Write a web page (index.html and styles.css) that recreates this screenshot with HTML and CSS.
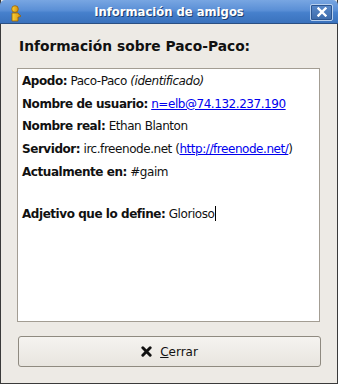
FILE: index.html
```html
<!DOCTYPE html>
<html>
<head>
<meta charset="utf-8">
<link rel="stylesheet" href="styles.css">
</head>
<body>
<div class="window">
  <div class="titlebar">
    <svg class="app-icon" width="12" height="17" viewBox="0 0 12 17">
      <defs>
        <linearGradient id="yg" x1="0" y1="0" x2="1" y2="0">
          <stop offset="0" stop-color="#f7d23a"/>
          <stop offset="1" stop-color="#d8900a"/>
        </linearGradient>
      </defs>
      <circle cx="5" cy="4" r="3.3" fill="url(#yg)" stroke="#9a6200" stroke-width="0.8"/>
      <path d="M2 8 L8 8 L9.5 10 L11 11 L9 12 L8 12 L8 16 L2 16 Z" fill="url(#yg)" stroke="#9a6200" stroke-width="0.8"/>
    </svg>
    <div class="title">Información de amigos</div>
    <div class="close-btn">
      <svg width="10" height="10" viewBox="0 0 10 10"><path d="M1.5 1.5 L8.5 8.5 M8.5 1.5 L1.5 8.5" stroke="#fff" stroke-width="2.4" stroke-linecap="square"/></svg>
    </div>
  </div>
  <div class="content">
    <h1 class="heading">Información sobre Paco-Paco:</h1>
    <div class="info-box">
      <div class="line"><b>Apodo:</b> Paco-Paco <i>(identificado)</i></div>
      <div class="line"><b>Nombre de usuario:</b> <a href="#">n=elb@74.132.237.190</a></div>
      <div class="line"><b>Nombre real:</b> Ethan Blanton</div>
      <div class="line"><b>Servidor:</b> irc.freenode.net (<a href="#">http://freenode.net/</a>)</div>
      <div class="line"><b>Actualmente en:</b> #gaim</div>
      <div class="line blank"></div>
      <div class="line"><b>Adjetivo que lo define:</b> Glorioso<span class="caret"></span></div>
    </div>
    <button class="btn">
      <svg class="btn-icon" width="11" height="11" viewBox="0 0 12 12"><path d="M2 2 L10 10 M10 2 L2 10" stroke="#111" stroke-width="3.2" stroke-linecap="round"/></svg>
      <span><u>C</u>errar</span>
    </button>
  </div>
</div>
</body>
</html>
```
FILE: styles.css
```css
html, body {
  margin: 0;
  padding: 0;
  background: #edeae5;
}
.window {
  width: 338px;
  height: 384px;
  box-sizing: border-box;
  border: 1px solid #3a3a3a;
  border-top: none;
  background: #edeae5;
  display: flex;
  flex-direction: column;
  font-family: "DejaVu Sans", sans-serif;
}
.titlebar {
  height: 23px;
  margin: 0 -1px;
  border-radius: 5px 5px 0 0;
  background: linear-gradient(#78a6e2 0%, #5a8fd6 45%, #4680cc 55%, #3a72bd 100%);
  border-bottom: 1px solid #2b4f82;
  display: flex;
  align-items: center;
}
.app-icon {
  margin-left: 10px;
  margin-top: 4px;
  flex: none;
}
.title {
  flex: 1;
  text-align: center;
  color: #fff;
  font-weight: bold;
  font-size: 11.6px;
  text-shadow: 1px 1px 0 #1f3f6f;
  padding-left: 6px;
}
.close-btn {
  width: 21px;
  height: 15px;
  margin-right: 5px;
  margin-top: 1px;
  border: 1px solid #b8d0ee;
  border-radius: 2px;
  background: linear-gradient(#5a8acb, #3c6aa9);
  display: flex;
  align-items: center;
  justify-content: center;
  box-shadow: inset 0 0 0 1px #2c5590;
}
.content {
  flex: 1;
  display: flex;
  flex-direction: column;
  padding: 12px 17px 16px 16px;
}
.heading {
  margin: 0 0 12px 2px;
  font-size: 13.8px;
  font-weight: bold;
  color: #111;
  line-height: 20px;
}
.info-box {
  flex: 1;
  background: #fff;
  border: 1px solid #a39d93;
  padding: 1px 4px;
  color: #111;
  font-size: 12px;
  letter-spacing: -0.45px;
}
.line {
  line-height: 22.7px;
  white-space: nowrap;
}
.line.blank {
  height: 19px;
}
.line a {
  color: #0000ee;
}
.caret {
  display: inline-block;
  width: 1px;
  height: 15px;
  background: #000;
  vertical-align: -3px;
  margin-left: 1px;
}
.btn {
  margin-top: 14px;
  height: 31px;
  margin-left: 1px;
  margin-right: -1px;
  border: 1px solid #8f8a80;
  border-radius: 3px;
  background: linear-gradient(#f5f3f0, #e8e5df);
  font-family: "DejaVu Sans", sans-serif;
  font-size: 12px;
  color: #111;
  display: flex;
  align-items: center;
  justify-content: center;
  gap: 8px;
  padding: 0;
}
.btn-icon {
  flex: none;
}
```
